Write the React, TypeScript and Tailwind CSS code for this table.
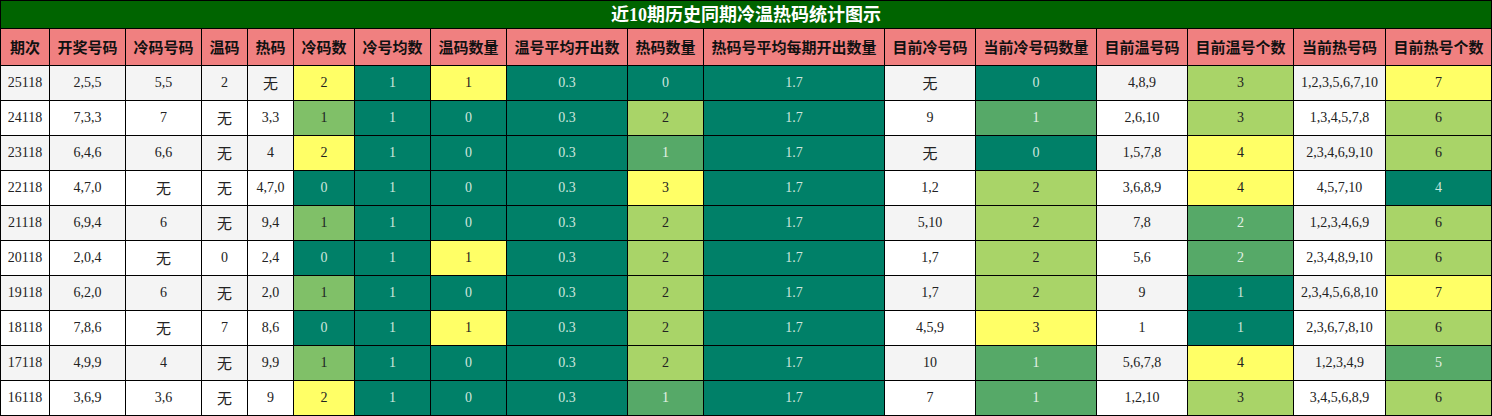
const widths = [49, 76, 76, 46, 46, 61, 76, 76, 121, 76, 181, 91, 121, 91, 106, 92, 106];

const headers = [
  "期次", "开奖号码", "冷码号码", "温码", "热码", "冷码数", "冷号均数", "温码数量", "温号平均开出数",
  "热码数量", "热码号平均每期开出数量", "目前冷号码", "当前冷号码数量", "目前温号码", "目前温号个数", "当前热号码", "目前热号个数",
];

// color keys: Y yellow, L light green, M mid green, D dark green, T teal
type Cell = string | [string, string];

const rows: Cell[][] = [
  ["25118", "2,5,5", "5,5", "2", "无", ["2", "Y"], ["1", "T"], ["1", "Y"], ["0.3", "T"], ["0", "T"], ["1.7", "T"], "无", ["0", "T"], "4,8,9", ["3", "L"], "1,2,3,5,6,7,10", ["7", "Y"]],
  ["24118", "7,3,3", "7", "无", "3,3", ["1", "M"], ["1", "T"], ["0", "T"], ["0.3", "T"], ["2", "L"], ["1.7", "T"], "9", ["1", "D"], "2,6,10", ["3", "L"], "1,3,4,5,7,8", ["6", "L"]],
  ["23118", "6,4,6", "6,6", "无", "4", ["2", "Y"], ["1", "T"], ["0", "T"], ["0.3", "T"], ["1", "D"], ["1.7", "T"], "无", ["0", "T"], "1,5,7,8", ["4", "Y"], "2,3,4,6,9,10", ["6", "L"]],
  ["22118", "4,7,0", "无", "无", "4,7,0", ["0", "T"], ["1", "T"], ["0", "T"], ["0.3", "T"], ["3", "Y"], ["1.7", "T"], "1,2", ["2", "L"], "3,6,8,9", ["4", "Y"], "4,5,7,10", ["4", "T"]],
  ["21118", "6,9,4", "6", "无", "9,4", ["1", "M"], ["1", "T"], ["0", "T"], ["0.3", "T"], ["2", "L"], ["1.7", "T"], "5,10", ["2", "L"], "7,8", ["2", "D"], "1,2,3,4,6,9", ["6", "L"]],
  ["20118", "2,0,4", "无", "0", "2,4", ["0", "T"], ["1", "T"], ["1", "Y"], ["0.3", "T"], ["2", "L"], ["1.7", "T"], "1,7", ["2", "L"], "5,6", ["2", "D"], "2,3,4,8,9,10", ["6", "L"]],
  ["19118", "6,2,0", "6", "无", "2,0", ["1", "M"], ["1", "T"], ["0", "T"], ["0.3", "T"], ["2", "L"], ["1.7", "T"], "1,7", ["2", "L"], "9", ["1", "T"], "2,3,4,5,6,8,10", ["7", "Y"]],
  ["18118", "7,8,6", "无", "7", "8,6", ["0", "T"], ["1", "T"], ["1", "Y"], ["0.3", "T"], ["2", "L"], ["1.7", "T"], "4,5,9", ["3", "Y"], "1", ["1", "T"], "2,3,6,7,8,10", ["6", "L"]],
  ["17118", "4,9,9", "4", "无", "9,9", ["1", "M"], ["1", "T"], ["0", "T"], ["0.3", "T"], ["2", "L"], ["1.7", "T"], "10", ["1", "D"], "5,6,7,8", ["4", "Y"], "1,2,3,4,9", ["5", "D"]],
  ["16118", "3,6,9", "3,6", "无", "9", ["2", "Y"], ["1", "T"], ["0", "T"], ["0.3", "T"], ["1", "D"], ["1.7", "T"], "7", ["1", "D"], "1,2,10", ["3", "L"], "3,4,5,6,8,9", ["6", "L"]],
];

const tone: Record<string, string> = {
  Y: "bg-[#ffff66] text-[#222]",
  L: "bg-[#a9d468] text-[#222]",
  M: "bg-[#80c068] text-[#222]",
  D: "bg-[#56a968] text-[#e4f2e6]",
  T: "bg-[#008068] text-[#cfe6de]",
};

export default function App() {
  return (
    <div className="w-[1492px] bg-white font-['Liberation_Serif','Noto_Sans_CJK_SC',serif]">
      <table className="w-[1492px] table-fixed border-collapse text-center">
        <colgroup>
          {widths.map((w, i) => (
            <col key={i} style={{ width: w }} />
          ))}
        </colgroup>
        <thead>
          <tr>
            <th colSpan={17} className="h-[28px] border border-black bg-[#006400] p-0 text-[18px] leading-[24px] font-bold text-white">
              近10期历史同期冷温热码统计图示
            </th>
          </tr>
          <tr>
            {headers.map((h) => (
              <th key={h} className="h-[37px] border border-black bg-[#f08080] p-0 font-['Noto_Sans_CJK_SC',sans-serif] text-[15px] leading-[20px] font-bold text-[#111]">
                {h}
              </th>
            ))}
          </tr>
        </thead>
        <tbody>
          {rows.map((r, ri) => (
            <tr key={ri} className={ri % 2 === 0 ? "bg-[#f4f4f4]" : "bg-white"}>
              {r.map((c, ci) => {
                const text = typeof c === "string" ? c : c[0];
                const cls = typeof c === "string" ? "text-[#222]" : tone[c[1]];
                return (
                  <td key={ci} className={`h-[35px] border border-black p-0 text-[14px] leading-[20px] ${cls} ${text === "无" ? "font-['Noto_Sans_CJK_SC',sans-serif] text-[15px]" : ""}`}>
                    {text}
                  </td>
                );
              })}
            </tr>
          ))}
        </tbody>
      </table>
    </div>
  );
}
